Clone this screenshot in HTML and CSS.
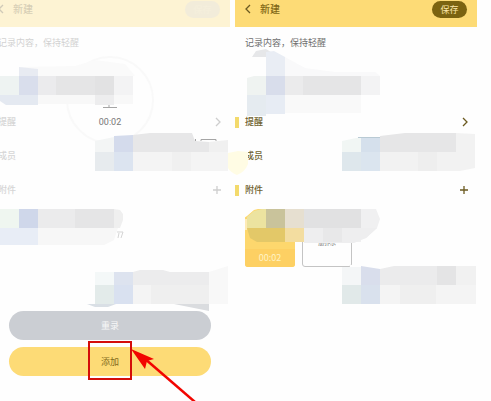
FILE: index.html
```html
<!DOCTYPE html>
<html lang="zh-CN">
  <head>
    <meta charset="UTF-8" />
    <meta name="viewport" content="width=device-width, initial-scale=1.0" />
    <title>新建</title>
    <link rel="stylesheet" href="styles.css">
  </head>
  <body>
    <div class="steps">
      <!-- recording finished, waiting for add  -->
      <section class="phone left">
        <div class="page faded">
          <header class="bar">
            <a href="#" class="back" aria-label="返回">
              <svg width="6" height="10" viewBox="0 0 6 10"><path d="M5 1 L1 5 L5 9" /></svg>
            </a>
            <h1>新建</h1>
            <button class="save" type="button">保存</button>
          </header>
          <p class="note">记录内容，保持轻醒</p>
          <ul class="rows">
            <li>
              <span>提醒</span>
              <svg class="icon" width="6" height="10" viewBox="0 0 6 10"><path d="M1 1 L5 5 L1 9" /></svg>
            </li>
            <li><span>成员</span></li>
            <li>
              <span>附件</span>
              <svg class="icon" width="8" height="8" viewBox="0 0 8 8"><path d="M4 0 V8 M0 4 H8" /></svg>
            </li>
          </ul>
        </div>
        <div class="sheet">
          <div class="timer"><time>00:02</time></div>
          <div class="actions">
            <button class="redo" type="button">重录</button>
            <button class="add" type="button">添加</button>
          </div>
        </div>
        <svg class="cover" width="230" height="401" viewBox="0 0 230 401">
          <path fill="#fafafa" d="M19 67 L75 66 L95 60 L125 64 L135 76 H19 Z" />
          <path fill="#eef3f2" d="M0 76 H19 V95 H0 Z" />
          <path fill="#e4e9f1" d="M0 95 H38 V105 H6 L0 101 Z" />
          <path fill="#e8ebf2" d="M19 67 L38 69 V76 H19 Z" />
          <rect x="19" y="76" width="19" height="19" fill="#d9deec" />
          <rect x="38" y="76" width="18" height="19" fill="#ebebed" />
          <rect x="56" y="76" width="39" height="19" fill="#e5e5e6" />
          <rect x="95" y="76" width="19" height="19" fill="#e2e2e3" />
          <rect x="114" y="76" width="19" height="19" fill="#f3f3f4" />
          <rect x="38" y="95" width="57" height="9" fill="#f8f8f8" />
          <rect x="95" y="95" width="19" height="10" fill="#ededee" />
          <rect x="114" y="95" width="19" height="9" fill="#f8f8f8" />
          <path stroke="#a5a5a5" fill="none" d="M109 105 V108 M103 107.5 H117" />

          <path fill="#f3f5f5" d="M95 141 L114 137 V152 H95 Z" />
          <path fill="#d4dbec" d="M114 136 L133 135 V152 H114 Z" />
          <path fill="#e7e7e8" d="M133 135 L150 133 H192 L195 141 L209 142 V152 H133 Z" />
          <path fill="#f0f0f0" d="M209 142 L228 140 V152 H209 Z" />
          <rect x="95" y="152" width="19" height="19" fill="#e7ebee" />
          <rect x="114" y="152" width="19" height="19" fill="#dce4f0" />
          <rect x="133" y="152" width="95" height="19" fill="#f4f4f4" />
          <rect x="172" y="152" width="19" height="19" fill="#f0f0f0" />
          <path stroke="#a5a5a5" fill="none" d="M195.5 139 V141 M201 141 V139.5 H216 V141" />

          <rect x="0" y="209" width="19" height="19" fill="#eff6f0" />
          <rect x="19" y="209" width="19" height="19" fill="#cfd7ea" />
          <rect x="38" y="209" width="37" height="19" fill="#ebebec" />
          <rect x="75" y="209" width="39" height="19" fill="#e5e5e6" />
          <path fill="#efefef" d="M114 209 L120 210 L123 214 V220 L120 228 H114 Z" />
          <rect x="0" y="228" width="38" height="17" fill="#e8edf6" />
          <path fill="#f7f7f7" d="M38 228 H118 L114 240 L104 245 H38 Z" />
          <path stroke="#d5d5d5" fill="none" d="M117 232 H123 L121 238 M119 233 L118 238" />

          <rect x="95" y="272" width="19" height="13" fill="#f4f8f8" />
          <rect x="114" y="272" width="19" height="13" fill="#dde3ef" />
          <path fill="#ececed" d="M133 272 L140 270 H163 L170 272 H209 V285 H133 Z" />
          <path fill="#f8f8f8" d="M209 272 L228 266 V304 H209 Z" />
          <rect x="95" y="285" width="19" height="19" fill="#e3ebea" />
          <rect x="114" y="285" width="19" height="19" fill="#d9e1f0" />
          <rect x="133" y="285" width="18" height="19" fill="#f4f4f4" />
          <rect x="151" y="285" width="58" height="19" fill="#efefef" />
          <path fill="#d9dfe5" d="M87 304 H116 L108 307 H95 Z" />
          <path fill="#dadcdf" d="M174 304 H209 V311 Z" />
        </svg>
        <!-- highlight on the add button  -->
        <svg class="mark" width="230" height="401" viewBox="0 0 230 401">
          <rect x="89" y="342" width="42" height="37" fill="none" stroke="#d40d0a" stroke-width="2" />
          <path d="M144 358 L195 402" stroke="#f20500" stroke-width="2.5" />
          <path d="M131 349 L154 359 L147 361 L145 369 Z" fill="#f20500" />
        </svg>
      </section>

      <!-- recording attached, ready to save  -->
      <section class="phone right">
        <div class="page">
          <header class="bar">
            <a href="#" class="back" aria-label="返回">
              <svg width="6" height="10" viewBox="0 0 6 10"><path d="M5 1 L1 5 L5 9" /></svg>
            </a>
            <h1>新建</h1>
            <button class="save" type="button">保存</button>
          </header>
          <p class="note">记录内容，保持轻醒</p>
          <ul class="rows">
            <li class="tag">
              <span>提醒</span>
              <svg class="icon" width="6" height="10" viewBox="0 0 6 10"><path d="M1 1 L5 5 L1 9" /></svg>
            </li>
            <li><span>成员</span></li>
            <li class="tag">
              <span>附件</span>
              <svg class="icon" width="8" height="8" viewBox="0 0 8 8"><path d="M4 0 V8 M0 4 H8" /></svg>
            </li>
          </ul>
          <div class="files">
            <div class="file audio"><time>00:02</time></div>
            <button class="file remove" type="button">删除</button>
          </div>
        </div>
        <svg class="cover" width="242" height="401" viewBox="235 0 242 401">
          <path fill="#e6e7e9" d="M252 57 L256 51 L266 49 L274 54 V57 Z" />
          <path fill="#fefefe" d="M252 57 H266 V76 H252 Z" />
          <path fill="#e9edf4" d="M266 52 L274 51 L285 57 V76 H266 Z" />
          <path fill="#f9f9fa" d="M285 57 L305 68 L335 72 L375 72 L380 76 H285 Z" />
          <path fill="#eff3f1" d="M247 78 L254 76 H266 V95 H247 Z" />
          <rect x="266" y="76" width="19" height="19" fill="#d8ddeb" />
          <rect x="285" y="76" width="18" height="19" fill="#ebebec" />
          <rect x="303" y="76" width="58" height="19" fill="#e5e5e6" />
          <rect x="361" y="76" width="19" height="19" fill="#f3f3f4" />
          <rect x="247" y="95" width="19" height="21" fill="#e5ebf0" />
          <rect x="266" y="95" width="19" height="19" fill="#e7ecf4" />
          <rect x="285" y="95" width="76" height="18" fill="#f9f9f9" />

          <path fill="#f1f6f4" d="M342 141 L361 137 V152 H342 Z" />
          <path fill="#d5e0ec" d="M361 137 H380 V152 H361 Z" />
          <path fill="#e6e6e7" d="M380 136 L405 133 H456 V152 H380 Z" />
          <path fill="#f2f2f2" d="M456 133 L475 134 V168 L460 171 H380 V152 H456 Z" />
          <rect x="342" y="152" width="19" height="19" fill="#dee7ec" />
          <rect x="361" y="152" width="19" height="19" fill="#dbe5ef" />
          <rect x="418" y="152" width="19" height="19" fill="#eeeeee" />
          <path stroke="#b9cad4" fill="none" d="M358 137.5 H380" />

          <path fill="#fefefe" d="M244 208 H262 L254 210 L247 216 L244 218 Z" />
          <path fill="#ece3a0" d="M247 217 L254 211 L262 209 H266 V228 H247 Z" />
          <rect x="266" y="209" width="19" height="19" fill="#c9c39b" />
          <rect x="285" y="209" width="19" height="19" fill="#e6dfd0" />
          <rect x="304" y="209" width="57" height="19" fill="#e1e1e2" />
          <path fill="#f0f0f1" d="M361 209 H376 L380 219 L377 228 L366 238 L352 242 H361 Z" />
          <path fill="#e3c868" d="M247 228 H285 V242 H257 L250 238 Z" />
          <rect x="285" y="228" width="19" height="14" fill="#f3dda0" />
          <path fill="#eeeeef" d="M304 228 H377 L366 238 L354 243 H304 Z" />
          <path fill="#e8e8e9" d="M323 228 H342 V242 H323 Z" />
          <path stroke="#ffffff" fill="none" d="M246 219 V230" />

          <path fill="#fefefe" d="M350 265 H392 V272 H350 Z" />
          <rect x="342" y="267" width="19" height="18" fill="#f4f6f7" />
          <path fill="#d9deec" d="M361 266 L380 269 V285 H361 Z" />
          <path fill="#ebebec" d="M380 269 L394 266 H437 V285 H380 Z" />
          <rect x="437" y="266" width="19" height="19" fill="#e4e4e5" />
          <rect x="456" y="266" width="20" height="19" fill="#f1f1f1" />
          <rect x="342" y="285" width="19" height="19" fill="#e1e9e9" />
          <rect x="361" y="285" width="19" height="19" fill="#d9e1ed" />
          <rect x="380" y="285" width="96" height="19" fill="#f4f4f4" />
          <rect x="400" y="285" width="36" height="19" fill="#efefef" />
        </svg>
        <svg class="blot" width="21" height="24" viewBox="0 0 21 24">
          <path fill="#fffce4" d="M0 2 L10 0 L20 1 V13 Q17 21 9 24 Q2 21 0 17 Z" />
        </svg>
      </section>
    </div>
  </body>
</html>
```

FILE: styles.css
```css
* {
  box-sizing: border-box;
  padding: 0;
  margin: 0;
}
body {
  font-family: "Noto Sans CJK SC", "Noto Sans", sans-serif;
  font-size: 9px;
  line-height: 18px;
  color: #6f6f6f;
  background: #fefefe;
}
button {
  font: inherit;
  border: none;
}
svg {
  display: block;
}
.steps {
  display: grid;
  grid-template-columns: 230fr 242fr;
  gap: 5px;
  min-height: 100vh;
  padding-right: 14px;
}
.phone {
  position: relative;
}
/* the first screen is cut off at its left edge */
.left {
  overflow: hidden;
}
.left .page {
  margin-left: -12px;
}
.faded {
  opacity: 0.31;
}
.bar {
  display: flex;
  align-items: center;
  gap: 9px;
  padding: 0 10px 9px;
  color: #806715;
  background: #fddb76;
}
.bar h1 {
  flex: 1;
  font-size: 10px;
  font-weight: 500;
}
.back path,
.icon path {
  fill: none;
  stroke: #6b5a20;
  stroke-width: 1.3;
}
.save {
  width: 35px;
  height: 17px;
  line-height: 17px;
  border-radius: 9px;
  color: #fbe7a8;
  background: #7b6310;
}
.faded .save {
  color: #e3cf94;
  background: #d8c78d;
}
.note {
  padding: 7px 10px;
}
.rows {
  padding-top: 46px;
  list-style: none;
}
.rows li {
  display: flex;
  align-items: center;
  justify-content: space-between;
  height: 34px;
  padding: 0 9px 0 10px;
  color: #6f6230;
  font-weight: 500;
}
.rows .tag {
  padding-left: 0;
}
.faded .rows li {
  color: #7c7c7c;
}
.faded .icon path {
  stroke: #666;
}
.tag span {
  display: flex;
  align-items: center;
  gap: 6px;
}
.tag span::before {
  content: "";
  width: 4px;
  height: 11px;
  background: #f3da6c;
}
.files {
  display: flex;
  gap: 7px;
  padding: 2px 10px;
}
.file {
  width: 50px;
  height: 58px;
  border-radius: 3px;
}
.audio {
  display: flex;
  flex-direction: column;
  justify-content: flex-end;
  text-align: center;
  color: #fff3c4;
  background: #fdd76d;
}
.audio time {
  border-radius: 0 0 3px 3px;
  background: #fdd063;
}
.remove {
  padding-top: 8px;
  color: #8c8c8c;
  border: 1px solid #c4c4c4;
  background: #fefefe;
}
.sheet {
  position: absolute;
  inset: 0;
  display: flex;
  flex-direction: column;
  align-items: center;
  justify-content: space-between;
  padding: 56px 19px 25px 9px;
}
.timer {
  display: flex;
  align-items: flex-end;
  justify-content: center;
  width: 88px;
  height: 88px;
  padding-bottom: 11px;
  border: 2px solid #f9f9f9;
  border-radius: 50%;
  font-family: Roboto, sans-serif;
  color: #777;
}
.actions {
  display: grid;
  gap: 7px;
  width: 100%;
}
.actions button {
  height: 29px;
  border-radius: 15px;
}
.redo {
  color: #f8f8f8;
  background: #cbced3;
}
.add {
  color: #836b1c;
  background: #fddb76;
}
.cover,
.mark {
  position: absolute;
  top: 0;
  left: 0;
  pointer-events: none;
}
.blot {
  position: absolute;
  top: 151px;
  left: -7px;
}
```
